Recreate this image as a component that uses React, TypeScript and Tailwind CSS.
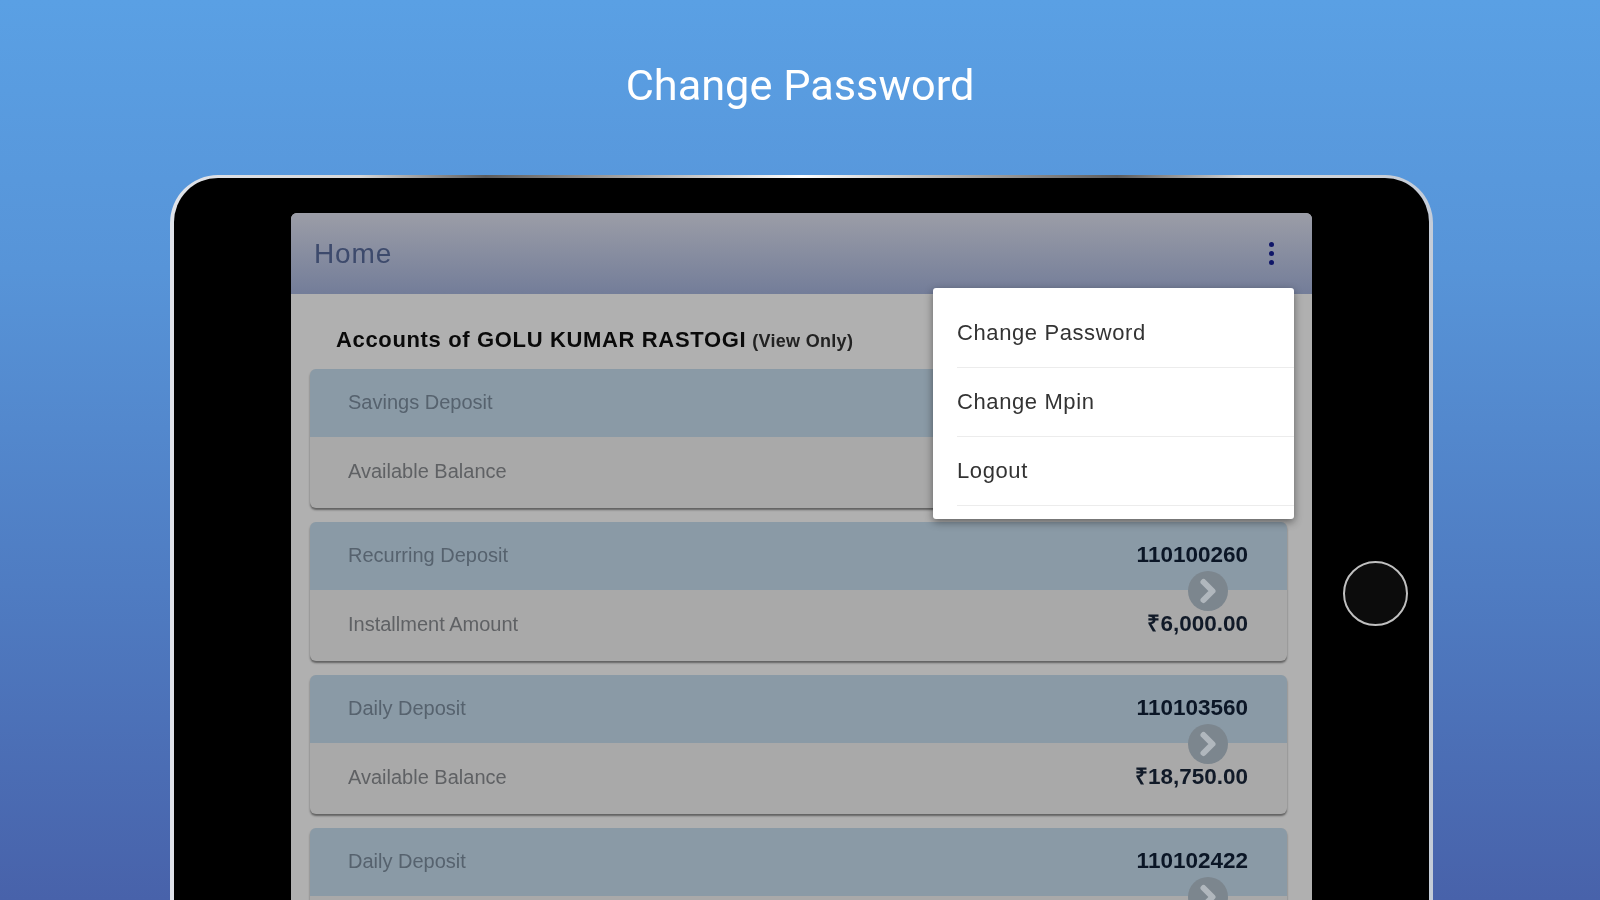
import { ChevronRight } from 'lucide-react';

interface Account {
  name: string;
  number: string;
  label: string;
  value: string;
  showArrow: boolean;
}

const accounts: Account[] = [
  { name: 'Savings Deposit', number: '', label: 'Available Balance', value: '', showArrow: false },
  { name: 'Recurring Deposit', number: '110100260', label: 'Installment Amount', value: '₹6,000.00', showArrow: true },
  { name: 'Daily Deposit', number: '110103560', label: 'Available Balance', value: '₹18,750.00', showArrow: true },
  { name: 'Daily Deposit', number: '110102422', label: '', value: '', showArrow: true },
];

const menuItems = ['Change Password', 'Change Mpin', 'Logout'];

function AccountCard({ account }: { account: Account }) {
  return (
    <div className="relative mb-[14px] rounded-[6px] bg-[#a9a9a9] shadow-[0_2px_2px_rgba(0,0,0,0.45)]">
      <div className="flex h-[68px] items-center justify-between rounded-t-[6px] bg-[#8a9aa6] pb-[3px] pl-[38px] pr-[39px]">
        <span className="text-[20px] text-[#56626e]">{account.name}</span>
        <span className="text-[22.5px] font-bold text-[#0b1626]">{account.number}</span>
      </div>
      <div className="flex h-[71px] items-center justify-between pb-[3px] pl-[38px] pr-[39px]">
        <span className="text-[20px] text-[#5f6164]">{account.label}</span>
        <span className="text-[22.5px] font-bold text-[#111a28]">{account.value}</span>
      </div>
      {account.showArrow && (
        <div className="absolute right-[59px] top-[49px] flex h-[40px] w-[40px] items-center justify-center rounded-full bg-[#7c868e]">
          <ChevronRight size={36} strokeWidth={4} className="text-[#b0b7bd]" />
        </div>
      )}
    </div>
  );
}

export default function App() {
  return (
    <div className="h-[900px] w-[1600px] overflow-hidden bg-[linear-gradient(180deg,#5aa0e4_0%,#5794d8_30%,#4f7cc2_65%,#4862aa_100%)] font-['Liberation_Sans',sans-serif]">
      <div className="flex h-[175px] items-center justify-center pb-[2px]">
        <h1 className="font-['Roboto',sans-serif] text-[43.3px] font-normal text-white blur-[0.4px]">Change Password</h1>
      </div>

      <div className="ml-[170px] h-[836px] w-[1263px] rounded-t-[48px] bg-[linear-gradient(90deg,#dfe3ea_0%,#d8d8d8_15%,#5c5c5c_25%,#ffffff_50%,#5c5c5c_75%,#d8d8d8_85%,#c4ccd8_100%)] px-[4px] pt-[3px] blur-[0.6px]">
        <div className="flex h-full rounded-t-[44px] bg-black pl-[117px] pt-[35px]">
          <div className="relative h-[900px] w-[1021px] shrink-0 rounded-t-[6px] bg-[#b0b0b0]">
            <div className="flex h-[81px] items-center justify-between rounded-t-[6px] bg-[linear-gradient(180deg,#9b9da7_0%,#737d99_100%)] pl-[23px] pr-[38px]">
              <span className="text-[28px] tracking-[0.9px] text-[#3d4a6c]">Home</span>
              <div className="flex flex-col gap-[4px]">
                <span className="h-[5px] w-[5px] rounded-full bg-[#0f1668]" />
                <span className="h-[5px] w-[5px] rounded-full bg-[#0f1668]" />
                <span className="h-[5px] w-[5px] rounded-full bg-[#0f1668]" />
              </div>
            </div>

            <div className="flex h-[75px] items-baseline pl-[45px] pt-[29px]">
              <span className="text-[22px] font-bold tracking-[0.65px] text-[#0a0a0a]">Accounts of GOLU KUMAR RASTOGI</span>
              <span className="ml-[6px] text-[18px] font-bold tracking-[0.3px] text-[#222222]">(View Only)</span>
            </div>

            <div className="ml-[19px] mr-[25px]">
              {accounts.map((account, i) => (
                <AccountCard key={i} account={account} />
              ))}
            </div>

            <div className="absolute left-[642px] top-[75px] h-[231px] w-[361px] rounded-[3px] bg-white pt-[11px] shadow-[0_3px_8px_rgba(0,0,0,0.45)]">
              {menuItems.map((item) => (
                <div key={item} className="ml-[24px] flex h-[69px] items-center border-b border-[#ececec] pb-[1px] text-[22px] tracking-[0.6px] text-[#333333]">
                  {item}
                </div>
              ))}
            </div>
          </div>

          <div className="flex h-[760px] flex-1 items-center justify-center pl-[9px]">
            <div className="h-[65px] w-[65px] rounded-full border-2 border-[#c0c0c0] bg-[#0c0c0c]" />
          </div>
        </div>
      </div>
    </div>
  );
}
